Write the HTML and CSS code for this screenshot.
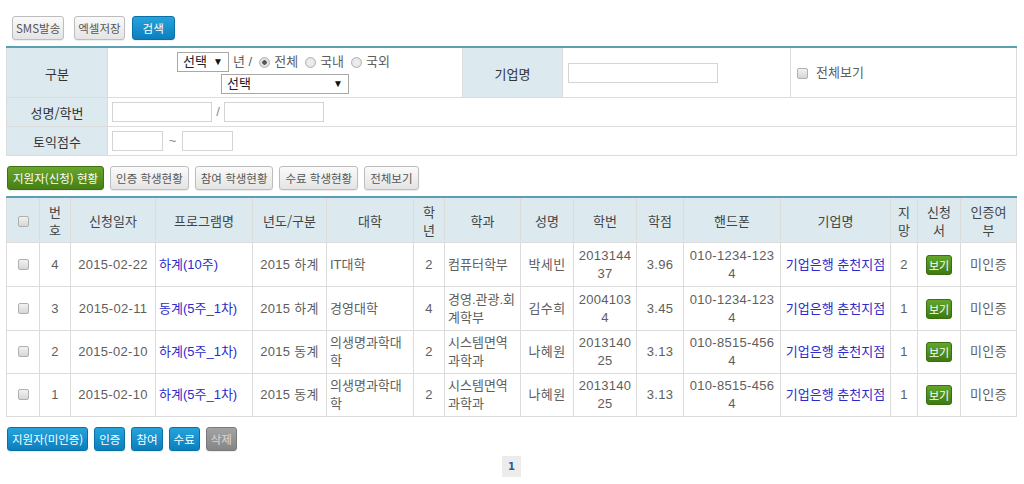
FILE: index.html
```html
<!DOCTYPE html>
<html lang="ko">
<head>
  <meta charset="UTF-8" />
  <title>지원자 현황</title>
  <link rel="stylesheet" href="styles.css">
</head>
<body>
  <div class="wrap">
    <div class="btn-bar top-bar">
      <button class="btn">SMS발송</button>
      <button class="btn">엑셀저장</button>
      <button class="btn btn-blue btn-search">검색</button>
    </div>

    <table class="search">
      <colgroup>
        <col style="width:101px"><col style="width:355px"><col style="width:100px"><col style="width:228px"><col>
      </colgroup>
      <tr class="row-kind">
        <th>구분</th>
        <td class="center">
          <div class="line">
            <span class="sel sel-sm">선택</span>
            <span class="txt">년 /</span>
            <span class="radio on"></span><span class="txt">전체</span>
            <span class="radio"></span><span class="txt">국내</span>
            <span class="radio"></span><span class="txt">국외</span>
          </div>
          <div class="line">
            <span class="sel sel-lg">선택</span>
          </div>
        </td>
        <th>기업명</th>
        <td><input type="text" class="inp inp-company"></td>
        <td class="all-view"><span class="chk"></span><span class="txt">전체보기</span></td>
      </tr>
      <tr>
        <th>성명/학번</th>
        <td colspan="4">
          <div class="field">
            <input type="text" class="inp inp-name"><span class="sep">/</span><input type="text" class="inp inp-name">
          </div>
        </td>
      </tr>
      <tr>
        <th>토익점수</th>
        <td colspan="4">
          <div class="field">
            <input type="text" class="inp inp-score"><span class="sep tilde">~</span><input type="text" class="inp inp-score">
          </div>
        </td>
      </tr>
    </table>

    <div class="btn-bar tab-bar">
      <button class="btn btn-green">지원자(신청) 현황</button>
      <button class="btn">인증 학생현황</button>
      <button class="btn">참여 학생현황</button>
      <button class="btn">수료 학생현황</button>
      <button class="btn">전체보기</button>
    </div>

    <table class="list">
      <colgroup>
        <col style="width:33px"><col style="width:31px"><col style="width:85px"><col style="width:97px">
        <col style="width:74px"><col style="width:87px"><col style="width:31px"><col style="width:76px">
        <col style="width:53px"><col style="width:63px"><col style="width:47px"><col style="width:97px">
        <col style="width:110px"><col style="width:27px"><col style="width:43px"><col>
      </colgroup>
      <thead>
        <tr>
          <th><span class="chk"></span></th>
          <th>번호</th>
          <th>신청일자</th>
          <th>프로그램명</th>
          <th>년도/구분</th>
          <th>대학</th>
          <th>학년</th>
          <th>학과</th>
          <th>성명</th>
          <th>학번</th>
          <th>학점</th>
          <th>핸드폰</th>
          <th>기업명</th>
          <th>지망</th>
          <th>신청서</th>
          <th>인증여부</th>
        </tr>
      </thead>
      <tbody>
        <tr>
          <td><span class="chk"></span></td>
          <td>4</td>
          <td>2015-02-22</td>
          <td class="left"><a href="#">하계(10주)</a></td>
          <td>2015 하계</td>
          <td class="left">IT대학</td>
          <td>2</td>
          <td class="left">컴퓨터학부</td>
          <td>박세빈</td>
          <td>201314437</td>
          <td>3.96</td>
          <td>010-1234-1234</td>
          <td><a href="#">기업은행 춘천지점</a></td>
          <td>2</td>
          <td><button class="btn-view">보기</button></td>
          <td>미인증</td>
        </tr>
        <tr>
          <td><span class="chk"></span></td>
          <td>3</td>
          <td>2015-02-11</td>
          <td class="left"><a href="#">동계(5주_1차)</a></td>
          <td>2015 하계</td>
          <td class="left">경영대학</td>
          <td>4</td>
          <td class="left">경영.관광.회계학부</td>
          <td>김수희</td>
          <td>20041034</td>
          <td>3.45</td>
          <td>010-1234-1234</td>
          <td><a href="#">기업은행 춘천지점</a></td>
          <td>1</td>
          <td><button class="btn-view">보기</button></td>
          <td>미인증</td>
        </tr>
        <tr class="tight">
          <td><span class="chk"></span></td>
          <td>2</td>
          <td>2015-02-10</td>
          <td class="left"><a href="#">하계(5주_1차)</a></td>
          <td>2015 동계</td>
          <td class="left">의생명과학대학</td>
          <td>2</td>
          <td class="left">시스템면역과학과</td>
          <td>나혜원</td>
          <td>201314025</td>
          <td>3.13</td>
          <td>010-8515-4564</td>
          <td><a href="#">기업은행 춘천지점</a></td>
          <td>1</td>
          <td><button class="btn-view">보기</button></td>
          <td>미인증</td>
        </tr>
        <tr class="tight">
          <td><span class="chk"></span></td>
          <td>1</td>
          <td>2015-02-10</td>
          <td class="left"><a href="#">하계(5주_1차)</a></td>
          <td>2015 동계</td>
          <td class="left">의생명과학대학</td>
          <td>2</td>
          <td class="left">시스템면역과학과</td>
          <td>나혜원</td>
          <td>201314025</td>
          <td>3.13</td>
          <td>010-8515-4564</td>
          <td><a href="#">기업은행 춘천지점</a></td>
          <td>1</td>
          <td><button class="btn-view">보기</button></td>
          <td>미인증</td>
        </tr>
      </tbody>
    </table>

    <div class="btn-bar bottom-bar">
      <button class="btn btn-blue">지원자(미인증)</button>
      <button class="btn btn-blue">인증</button>
      <button class="btn btn-blue">참여</button>
      <button class="btn btn-blue">수료</button>
      <button class="btn btn-gray">삭제</button>
    </div>

    <div class="paging">
      <a href="#" class="page on">1</a>
    </div>
  </div>
</body>
</html>
```

FILE: styles.css
```css
:root {
  --line: #dcdcdc;
  --head-bg: #dceaef;
  --teal: #5c9fb0;
  --text: #5e5e5e;
  --link: #2b2bcc;
}

body {
  margin: 0;
  font-family: "Liberation Sans", "Noto Sans CJK KR", sans-serif;
  font-size: 13px;
  color: var(--text);
  background: #fff;
}

.wrap {
  padding: 16px 7px 0 6px;
}

/* buttons */
.btn-bar {
  display: flex;
  gap: 6px;
}

.top-bar {
  margin-left: 6px;
  gap: 10px;
}

.top-bar .btn {
  padding: 0 3px;
}

.top-bar .btn-search {
  margin-left: -3px;
  padding: 0 10px;
}

.btn {
  height: 24px;
  padding: 0 5px;
  font-family: "Noto Sans CJK KR", sans-serif;
  font-size: 11.5px;
  color: #555;
  background: linear-gradient(#fafafa, #e4e4e4);
  border: 1px solid #bdbdbd;
  border-radius: 3px;
  box-shadow: 0 1px 1px rgba(0,0,0,0.08);
  cursor: pointer;
  line-height: 20px;
}

.btn-blue {
  color: #fff;
  background: linear-gradient(#27a3dc, #0b7fbe);
  border-color: #0a70a8;
}

.btn-green {
  color: #fff;
  background: linear-gradient(#6aa52c, #467f15);
  border-color: #3d7212;
}

.btn-gray {
  color: #d8d8d8;
  background: linear-gradient(#a3a3a3, #858585);
  border-color: #7a7a7a;
}

/* search form */
.search {
  width: 100%;
  margin-top: 6px;
  border-collapse: collapse;
  table-layout: fixed;
  border-top: 2px solid var(--teal);
  border-bottom: 1px solid var(--line);
  border-right: 1px solid var(--line);
}

.search th {
  background: var(--head-bg);
  font-family: "Noto Sans CJK KR", sans-serif;
  font-weight: normal;
  font-size: 13px;
  color: #333;
  border: 1px solid var(--line);
  border-top: 0;
  height: 20px;
  padding: 4px 5px;
}

.search td {
  border: 1px solid var(--line);
  border-top: 0;
  padding: 4px 4px;
  line-height: 20px;
}

.search .row-kind th,
.search .row-kind td {
  padding: 4px 5px 3px;
}

.search .line {
  display: flex;
  justify-content: center;
  align-items: center;
  height: 20px;
}

.search .line + .line {
  margin-top: 2px;
}

.txt {
  margin-left: 4px;
  margin-right: 3px;
}

.sel {
  position: relative;
  display: inline-block;
  box-sizing: border-box;
  height: 20px;
  line-height: 18px;
  border: 1px solid #a8a8a8;
  background: #fff;
  color: #222;
  text-align: left;
  padding-left: 5px;
}

.sel::after {
  content: "▼";
  position: absolute;
  right: 5px;
  top: 0;
  font-size: 10px;
  color: #111;
}

.sel-sm { width: 52px; }
.sel-lg { width: 128px; }

.radio {
  display: inline-block;
  box-sizing: border-box;
  width: 11px;
  height: 11px;
  margin-left: 4px;
  border: 1px solid #b4b4b4;
  border-radius: 50%;
  background: radial-gradient(circle, #ececec 40%, #d6d6d6 100%);
}

.radio.on {
  background: radial-gradient(circle, #555 0 2px, #e6e6e6 2.5px, #d0d0d0 100%);
}

.chk {
  display: inline-block;
  box-sizing: border-box;
  width: 11px;
  height: 11px;
  border: 1px solid #b0b0b0;
  border-radius: 2px;
  background: linear-gradient(#f2f2f2, #d6d6d6);
  vertical-align: middle;
}

.all-view {
  padding-left: 6px !important;
}

.all-view .txt {
  margin-left: 8px;
}

.field {
  display: flex;
  align-items: center;
}

.inp {
  box-sizing: border-box;
  height: 20px;
  border: 1px solid #d4d4d4;
  margin: 0;
  padding: 0 3px;
}

.inp-company { width: 150px; }
.inp-name { width: 100px; }
.inp-score { width: 51px; }

.sep {
  width: 12px;
  text-align: center;
  color: #888;
}

.tilde {
  width: 19px;
}

/* list */
.tab-bar {
  margin-top: 10px;
  margin-left: 1px;
}

.list {
  width: 100%;
  margin-top: 6px;
  border-collapse: collapse;
  table-layout: fixed;
  border-top: 2px solid var(--teal);
}

.list th,
.list td {
  border: 1px solid var(--line);
  text-align: center;
  vertical-align: middle;
  line-height: 18px;
  word-break: break-all;
}

.list th {
  border-top: 0;
  background: var(--head-bg);
  font-family: "Noto Sans CJK KR", sans-serif;
  font-weight: normal;
  color: #444;
  padding: 5px 5px 3px;
  height: 36px;
}

.list td {
  height: 36px;
  padding: 4px 4px 3px;
  letter-spacing: 0.3px;
}

.list .tight td {
  padding: 3px 4px 3px;
}

.list td.left {
  text-align: left;
  padding-left: 3px;
  padding-right: 3px;
  letter-spacing: 0;
}

.list a {
  color: var(--link);
  text-decoration: none;
  letter-spacing: 0;
}

.list td:first-child .chk,
.list th:first-child .chk {
  margin-top: -2px;
}

.btn-view {
  height: 20px;
  padding: 0 2px;
  font-family: "Noto Sans CJK KR", sans-serif;
  font-size: 11px;
  line-height: 16px;
  color: #fff;
  background: linear-gradient(#63a62a, #3f7a12);
  border: 1px solid #3a6e10;
  border-radius: 3px;
}

.bottom-bar {
  margin-top: 10px;
  margin-left: 1px;
}

.bottom-bar .btn {
  padding: 0 4px;
}

.paging {
  display: flex;
  justify-content: center;
  margin-top: 5px;
}

.page {
  display: inline-block;
  width: 19px;
  height: 21px;
  line-height: 21px;
  text-align: center;
  font-family: "DejaVu Sans", sans-serif;
  font-size: 10px;
  font-weight: bold;
  color: #2d5b95;
  background: #ececec;
  text-decoration: none;
}
```
